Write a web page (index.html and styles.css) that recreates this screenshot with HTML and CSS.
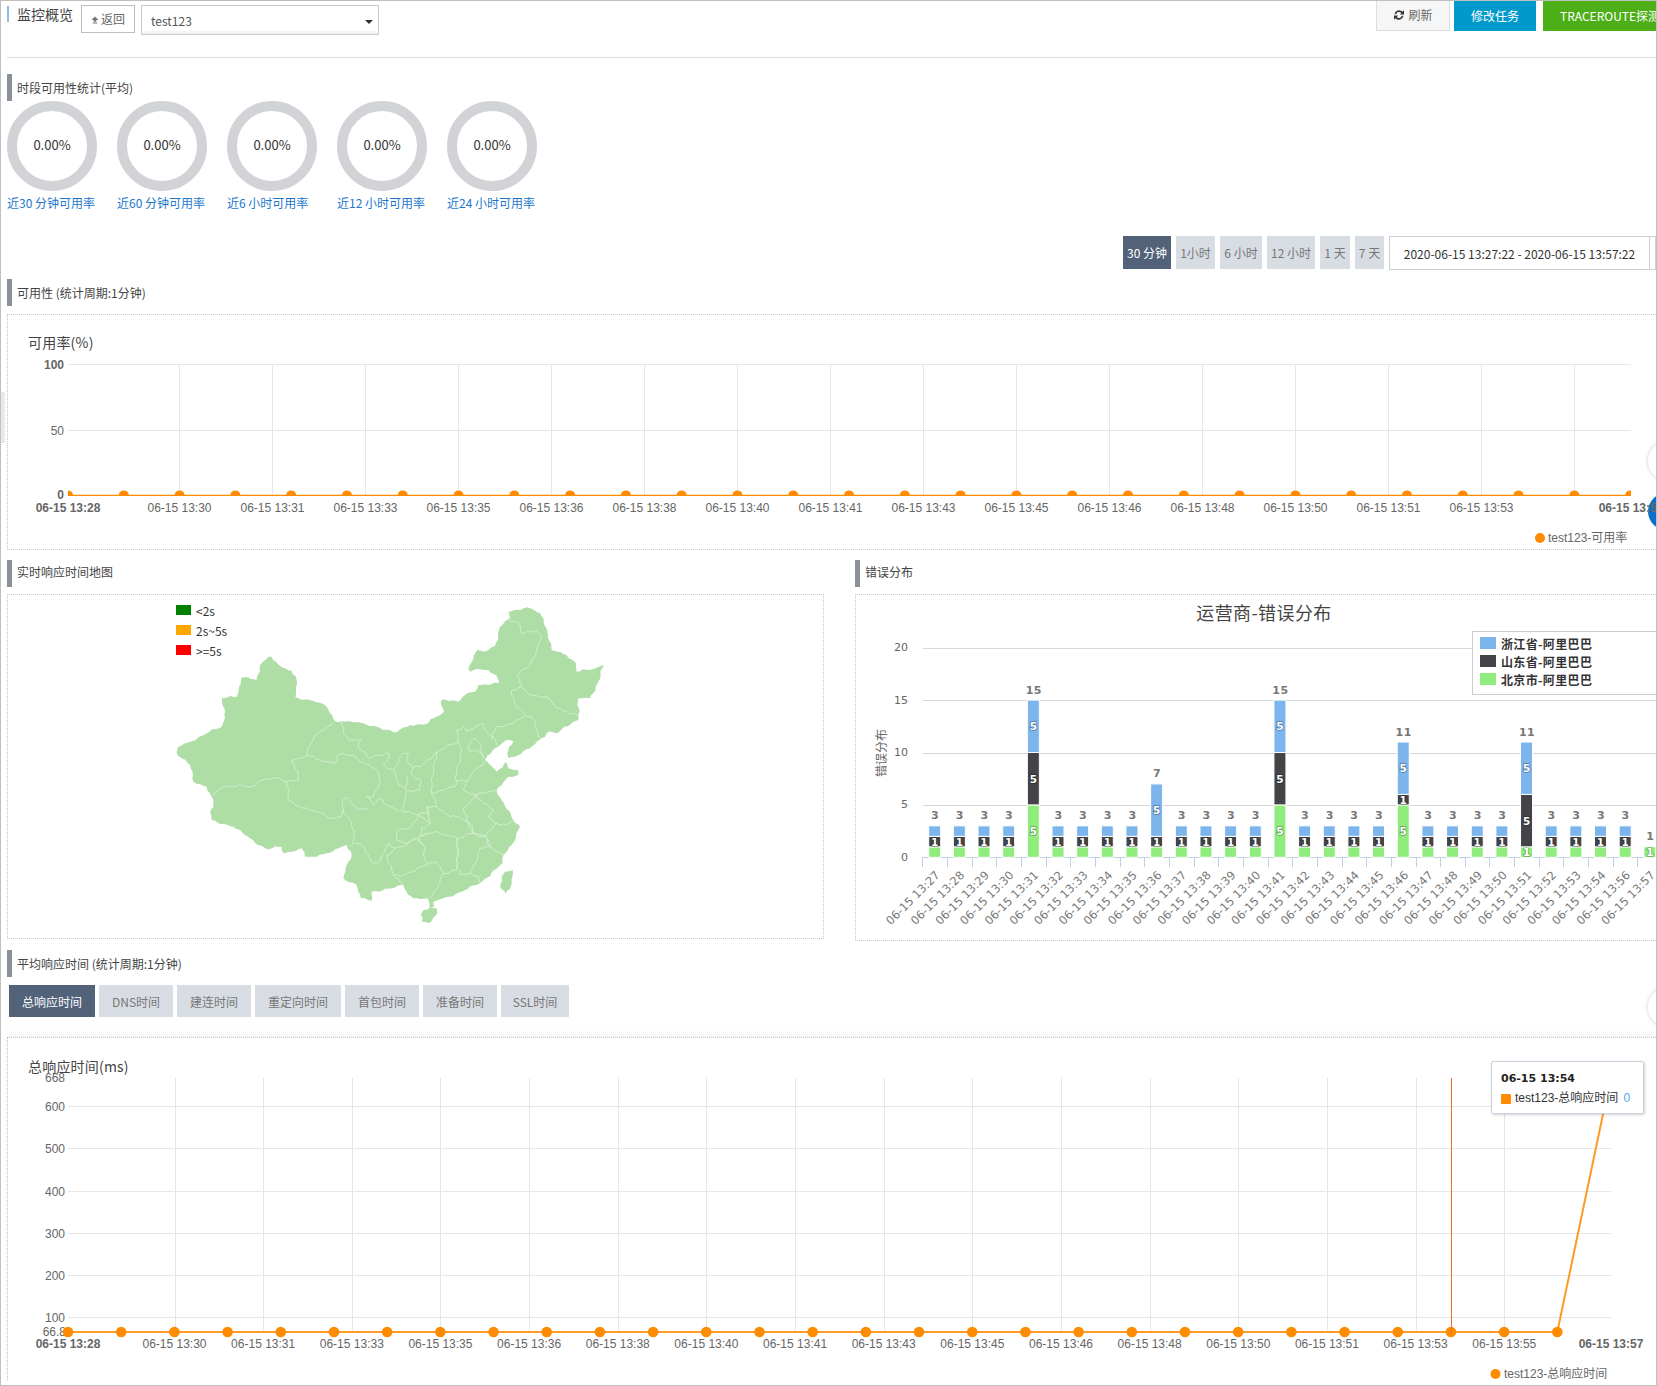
FILE: index.html
```html
<!DOCTYPE html>
<html lang="zh-CN">
<head>
<meta charset="utf-8">
<title>监控概览</title>
<link rel="stylesheet" href="styles.css">
</head>
<body>
<div class="page">
  <div class="side-tab"></div>
  <div class="edge-dot edge-white edge-a"></div>
  <div class="edge-dot edge-blue"></div>
  <div class="edge-dot edge-white edge-b"></div>

  <header class="top">
    <h1 class="title">监控概览</h1>
    <a class="back">
      <svg class="back-icon" viewBox="0 0 9 8"><path d="M4.5 0 8.5 4H6v2H3V4H.5zM2 6.800h5V8H2z"/></svg>返回
    </a>
    <div class="select"><span>test123</span><i class="caret"></i></div>
    <div class="actions">
      <a class="btn btn-light">
        <svg class="refresh" viewBox="0 0 12 12"><path d="M1.500 5.200A4.600 4.600 0 0 1 9.500 2.800L11 1.300V5.500H6.800L8.300 4A3 3 0 0 0 3.100 5.200zM10.500 6.800A4.600 4.600 0 0 1 2.500 9.200L1 10.700V6.500H5.200L3.700 8A3 3 0 0 0 8.900 6.800z"/></svg>刷新
      </a>
      <a class="btn btn-blue">修改任务</a>
      <a class="btn btn-green">TRACEROUTE探测</a>
    </div>
  </header>

  <main class="content">
    <div class="sec sec-first">时段可用性统计(平均)</div>
    <div class="rings">
      <div class="ring-item"><div class="ring">0.00%</div><a class="ring-label">近30 分钟可用率</a></div>
      <div class="ring-item"><div class="ring">0.00%</div><a class="ring-label">近60 分钟可用率</a></div>
      <div class="ring-item"><div class="ring">0.00%</div><a class="ring-label">近6 小时可用率</a></div>
      <div class="ring-item"><div class="ring">0.00%</div><a class="ring-label">近12 小时可用率</a></div>
      <div class="ring-item"><div class="ring">0.00%</div><a class="ring-label">近24 小时可用率</a></div>
    </div>

    <div class="range">
      <a class="rbtn rbtn-on w48">30 分钟</a>
      <a class="rbtn w39">1小时</a>
      <a class="rbtn w42">6 小时</a>
      <a class="rbtn w48">12 小时</a>
      <a class="rbtn w30">1 天</a>
      <a class="rbtn w29">7 天</a>
      <div class="picker"><span class="picker-text">2020-06-15 13:27:22 - 2020-06-15 13:57:22</span></div>
    </div>

    <div class="sec sec-gap">可用性 (统计周期:1分钟)</div>
    <div class="box box-avail"><svg id="avail" class="svg-avail" viewBox="8 315 1648 234"></svg></div>

    <div class="two">
      <section class="col-map">
        <div class="sec sec-up">实时响应时间地图</div>
        <div class="box box-map"><svg id="map" class="svg-map" viewBox="8 595 815 343"></svg></div>
      </section>
      <section class="col-err">
        <div class="sec sec-up">错误分布</div>
        <div class="box box-err"><svg id="err" class="svg-err" viewBox="856 595 800 345"></svg></div>
      </section>
    </div>

    <div class="sec sec-gap">平均响应时间 (统计周期:1分钟)</div>
    <div class="tabs">
      <a class="tab tab-on t86">总响应时间</a>
      <a class="tab t74">DNS时间</a>
      <a class="tab t74">建连时间</a>
      <a class="tab t86">重定向时间</a>
      <a class="tab t74">首包时间</a>
      <a class="tab t74">准备时间</a>
      <a class="tab t68">SSL时间</a>
    </div>
    <div class="box box-resp">
      <svg id="resp" class="svg-resp" viewBox="8 1038 1648 343"></svg>
      <div class="tip">
        <div class="tip-title">06-15 13:54</div>
        <div class="tip-row"><i class="tip-sw"></i>test123-总响应时间<b class="tip-val">0</b></div>
      </div>
    </div>
  </main>
</div>
<script src="charts.js"></script>
</body>
</html>
```

FILE: styles.css
```css
* { box-sizing: border-box; }
html, body { margin: 0; padding: 0; background: #fff; }
body { font-family: "Noto Sans CJK SC", "Liberation Sans", sans-serif; font-size: 12px; color: #444; }
.page { position: relative; width: 1657px; height: 1386px; border: 1px solid #bfbfbf; overflow: hidden; background: #fff; }

.side-tab { position: absolute; left: 0; top: 391px; width: 4px; height: 51px; background: #e9e9e9; }
.edge-dot { position: absolute; border-radius: 50%; }
.edge-white { left: 1647px; width: 40px; height: 40px; background: #fff; box-shadow: 0 0 4px rgba(0, 0, 0, .2); }
.edge-a { top: 440px; }
.edge-b { top: 986px; }
.edge-blue { left: 1647px; top: 492px; width: 37px; height: 37px; background: #0a6fc9; }

.top { display: flex; align-items: flex-start; height: 57px; margin-left: 6px; border-bottom: 1px solid #dcdcdc; }
.title { flex: none; margin: 5px 0 0; width: 66px; height: 16px; padding-left: 8px; border-left: 2px solid #8fbde3; font-size: 14px; font-weight: 400; line-height: 16px; color: #444; white-space: nowrap; }
.back { display: flex; flex: none; align-items: center; justify-content: center; width: 54px; height: 28px; margin: 4px 0 0 8px; border: 1px solid #bdbdbd; color: #666; line-height: 1; }
.back-icon { width: 8px; height: 8px; margin: 2px 2px 0 0; fill: #777; }
.select { position: relative; flex: none; width: 238px; height: 30px; margin: 4px 0 0 6px; padding: 0 9px; border: 1px solid #c9c9c9; line-height: 30px; color: #555; box-shadow: inset 0 -3px 0 #f4f4f4; }
.caret { position: absolute; right: 5px; top: 14px; border-style: solid; border-width: 4px 4px 0; border-color: #333 transparent transparent; }
.actions { display: flex; flex: none; margin-left: 997px; }
.btn { display: flex; align-items: center; justify-content: center; flex: none; height: 30px; padding-bottom: 2px; color: #fff; white-space: nowrap; }
.btn-light { width: 74px; height: 31px; margin-top: -1px; background: #f6f6f6; border: 1px solid #dedede; color: #666; }
.btn-blue { width: 82px; margin-left: 4px; background: #0099cc; }
.btn-green { width: 130px; margin-left: 7px; background: #4daf18; padding-left: 17px; justify-content: flex-start; }
.refresh { width: 12px; height: 12px; margin-right: 3px; fill: #333; }

.content { padding-left: 6px; }
.sec { height: 27px; padding-left: 5px; border-left: 5px solid #8a9097; line-height: 27px; font-size: 12px; color: #444; }
.sec-first { margin-top: 16px; }
.sec-gap { margin-top: 9px; }
.sec-up { line-height: 24px; }

.rings { display: flex; }
.ring-item { width: 110px; flex: none; }
.ring { display: flex; align-items: center; justify-content: center; width: 90px; height: 90px; padding-bottom: 3px; border: 10px solid #d2d3d7; border-radius: 50%; font-size: 13px; color: #333; }
.ring-label { display: block; margin-top: 3px; line-height: 18px; color: #2277cc; white-space: nowrap; }

.range { display: flex; justify-content: flex-end; gap: 5px; margin-top: 24px; height: 34px; }
.rbtn { display: flex; align-items: center; justify-content: center; height: 33px; padding-bottom: 1px; background: #d8dde4; color: #777; white-space: nowrap; }
.rbtn-on { background: #526278; color: #fff; }
.w48 { width: 48px; } .w39 { width: 39px; } .w42 { width: 42px; } .w30 { width: 30px; } .w29 { width: 29px; }
.picker { width: 267px; height: 34px; border: 1px solid #cfcfcf; }
.picker-text { display: flex; align-items: center; justify-content: center; width: 260px; height: 32px; border-right: 1px solid #cfcfcf; color: #333; white-space: nowrap; }

.box { position: relative; margin-top: 8px; border: 1px dotted #c4c4c4; border-right: 0; overflow: hidden; }
.box svg { display: block; }
.box-avail { height: 236px; }
.svg-avail { width: 1648px; height: 234px; }

.two { display: flex; margin-top: 10px; }
.col-map { width: 817px; flex: none; }
.col-err { width: 801px; flex: none; margin-left: 31px; }
.box-map { height: 345px; margin-top: 7px; border-right: 1px dotted #c4c4c4; }
.svg-map { width: 815px; height: 343px; }
.box-err { height: 347px; margin-top: 7px; }
.svg-err { width: 800px; height: 345px; }

.tabs { display: flex; gap: 4px; margin: 8px 0 0 2px; }
.tab { display: flex; align-items: center; justify-content: center; height: 32px; background: #d8dde4; color: #777; white-space: nowrap; }
.tab-on { background: #526278; color: #fff; }
.t86 { width: 86px; } .t74 { width: 74px; } .t68 { width: 68px; }
.box-resp { height: 344px; margin-top: 20px; border-bottom: 0; overflow: visible; box-shadow: 0 -3px 5px rgba(0, 0, 0, .05); }
.svg-resp { width: 1648px; height: 343px; }

.tip { position: absolute; left: 1483px; top: 23px; width: 153px; height: 53px; padding: 9px 9px 0; background: #fff; border: 1px solid #c8d2de; border-radius: 2px; box-shadow: 1px 1px 3px rgba(0, 0, 0, .18); font-family: "Liberation Sans", "Noto Sans CJK SC", sans-serif; color: #333; }
.tip-title { font-family: "DejaVu Sans", sans-serif; font-size: 11px; font-weight: 700; line-height: 15px; color: #222; }
.tip-row { display: flex; align-items: center; margin-top: 3px; line-height: 18px; font-size: 12px; white-space: nowrap; }
.tip-sw { width: 10px; height: 10px; margin: 2px 4px 0 0; background: #ff8c00; border-radius: 1px; }
.tip-val { margin-left: 5px; font-weight: 400; color: #55a5e0; }

/* chart pieces */
.svg-avail text, .svg-resp text, .svg-map text, .svg-err text { dominant-baseline: central; }
.c-title { font-family: "Noto Sans CJK SC", sans-serif; font-size: 14px; letter-spacing: .2px; fill: #444; }
.c-grid { stroke: #e6e6e6; stroke-width: 1; shape-rendering: crispEdges; }
.c-lab { font-family: "Liberation Sans", sans-serif; font-size: 12px; fill: #666; }
.c-lab-b { font-family: "Liberation Sans", sans-serif; font-size: 12px; font-weight: 700; fill: #666; }
.c-leg { font-family: "Liberation Sans", "Noto Sans CJK SC", sans-serif; font-size: 12px; fill: #666; }
.c-line { fill: none; stroke: #ff8c00; stroke-width: 1.500; }
.c-line-2 { fill: none; stroke: #ff9a26; stroke-width: 2; }
.c-pt { fill: #ff8c00; }
.c-cross { stroke: #ee6d22; stroke-width: 1; shape-rendering: crispEdges; }

.m-land { fill: #aedea6; }
.m-line { fill: none; stroke: #e2f3de; stroke-width: 2; stroke-linejoin: round; }
.m-leg { font-family: "Noto Sans CJK SC", sans-serif; font-size: 12px; fill: #333; }
.m-green { fill: #008000; } .m-orange { fill: #ffa500; } .m-red { fill: #ff0000; }

.e-grid { stroke: #d8d8d8; stroke-width: 1; shape-rendering: crispEdges; }
.e-axis { stroke: #c0d0e0; stroke-width: 1; shape-rendering: crispEdges; }
.e-y { font-family: "DejaVu Sans", sans-serif; font-size: 11px; fill: #666; }
.e-x { font-family: "DejaVu Sans", sans-serif; font-size: 11.500px; fill: #777; }
.e-ytitle { font-family: "Noto Sans CJK SC", sans-serif; font-size: 12px; fill: #666; }
.e-title { font-family: "Noto Sans CJK SC", sans-serif; font-size: 18px; letter-spacing: .4px; fill: #444; }
.e-seg { stroke: #fff; stroke-width: 1; }
.e-blue { fill: #7cb5ec; } .e-black { fill: #434348; } .e-green { fill: #90ed7d; }
.e-num { font-family: "DejaVu Sans", sans-serif; font-size: 10.500px; font-weight: 700; fill: #fff; paint-order: stroke; stroke: rgba(0, 0, 0, .35); stroke-width: 1.500; }
.e-sum { font-family: "DejaVu Sans", sans-serif; font-size: 11px; font-weight: 700; letter-spacing: .5px; fill: #777; }
.e-legbox { fill: #fff; stroke: #cccccc; stroke-width: 1; shape-rendering: crispEdges; }
.e-legtxt { font-family: "Noto Sans CJK SC", sans-serif; font-size: 12px; font-weight: 700; letter-spacing: .35px; fill: #333; }
```

FILE: charts.js
```js
function pad(n) { return (n < 10 ? "0" : "") + n; }
function line(x1, y1, x2, y2, c) { return '<line class="' + c + '" x1="' + x1 + '" y1="' + y1 + '" x2="' + x2 + '" y2="' + y2 + '"/>'; }
function text(x, y, s, c, anchor, extra) {
  return '<text class="' + c + '" x="' + x + '" y="' + y + '" text-anchor="' + (anchor || "start") + '"' + (extra || "") + ">" + s + "</text>";
}

/* availability chart */
(function () {
  var h = "", i, x;
  h += text(28, 342, "可用率(%)", "c-title");
  [364.5, 430.5, 495.5].forEach(function (y) { h += line(68, y, 1631, y, "c-grid"); });
  for (i = 0; i < 16; i++) { x = Math.round(179.3 + 93 * i) + 0.5; h += line(x, 364, x, 495, "c-grid"); }
  h += text(64, 365, "100", "c-lab-b", "end") + text(64, 431, "50", "c-lab", "end") + text(64, 495, "0", "c-lab-b", "end");
  var labs = ["13:30", "13:31", "13:33", "13:35", "13:36", "13:38", "13:40", "13:41", "13:43", "13:45", "13:46", "13:48", "13:50", "13:51", "13:53"];
  h += text(68, 508, "06-15 13:28", "c-lab-b", "middle");
  labs.forEach(function (l, k) { h += text(179.5 + 93 * k, 508, "06-15 " + l, "c-lab", "middle"); });
  h += text(1631, 508, "06-15 13:57", "c-lab-b", "middle");
  h += '<clipPath id="cp1"><rect x="68" y="355" width="1563" height="141"/></clipPath><g clip-path="url(#cp1)">';
  h += line(68, 495.4, 1631, 495.4, "c-line");
  for (i = 0; i < 29; i++) { h += '<circle class="c-pt" cx="' + (68 + 55.79 * i) + '" cy="495.400" r="5"/>'; }
  h += "</g>";
  h += '<circle class="c-pt" cx="1540" cy="538" r="5"/>' + text(1548, 538, "test123-可用率", "c-leg");
  document.getElementById("avail").innerHTML = h;
})();

/* province map, traced in a 1440x1050 working space */
(function () {
  /* roughen a traced polyline so borders read as organic, not straight-edged */
  var seed = 0;
  function rough(pts, amp) {
    var out = [], a = pts.trim().split(/\s+/).map(function (p) { return p.split(",").map(Number); });
    a.forEach(function (p, i) {
      out.push(p);
      if (i === a.length - 1) return;
      var q = a[i + 1], dx = q[0] - p[0], dy = q[1] - p[1], len = Math.sqrt(dx * dx + dy * dy);
      var n = Math.floor(len / 9);
      for (var k = 1; k < n; k++) {
        seed += 1;
        var t = k / n, off = (Math.sin(seed * 1.7) + Math.sin(seed * 0.63) * 0.8) * amp * Math.sin(Math.PI * t);
        out.push([Math.round(p[0] + dx * t - dy / len * off), Math.round(p[1] + dy * t + dx / len * off)]);
      }
    });
    return out.map(function (p) { return p.join(","); }).join(" ");
  }
  var main = "365,200 378,215 395,232 425,242 440,270 436,322 490,332 530,350 555,393 575,393 640,400 680,410 735,428 780,405 830,402 860,380 882,365 872,335 880,327 925,335 945,315 975,305 985,285 1048,278 1040,258 1015,240 990,238 960,245 955,235 982,180 1005,185 1035,168 1050,110 1080,85 1076,65 1130,52 1170,70 1190,115 1205,180 1250,195 1278,220 1280,245 1320,240 1362,225 1345,275 1320,325 1285,325 1285,390 1270,395 1222,430 1195,425 1168,450 1140,475 1105,495 1075,505 1072,490 1090,455 1070,450 1045,470 1012,497 1005,510 1040,545 1068,515 1075,535 1105,540 1105,555 1075,560 1040,600 1055,630 1090,690 1110,710 1095,750 1060,795 1058,820 990,880 935,905 880,925 850,935 852,950 838,955 832,925 790,925 770,905 760,885 725,895 665,905 665,932 632,925 620,885 580,865 590,825 605,795 590,765 575,770 530,790 500,800 465,800 455,775 400,790 395,770 350,778 300,745 250,710 185,690 180,665 190,650 185,620 170,590 130,575 120,525 80,490 85,470 120,455 170,430 215,410 225,385 215,325 260,320 275,262 320,270 330,225 355,200 365,200";
  var hainan = "812,975 820,960 860,955 862,970 838,1000 815,995 812,975";
  var taiwan = "1065,845 1088,840 1085,880 1067,912 1050,890 1055,860 1065,845";
  var borders = [
    "190,618 215,592 250,590 270,582 300,592 340,570 380,563 415,573 443,573 445,545 425,512 470,495 485,455 510,425 550,400",
    "410,575 415,630 450,650 500,665 540,685 575,680 578,630 590,622 605,640 625,660 655,655",
    "578,660 605,695 612,745 605,770",
    "470,495 510,510 555,520 570,492 610,497 640,517 680,540 692,575 670,620 650,620 670,645 690,625 720,650 745,662",
    "575,393 580,430 600,450 635,450 625,470 660,505 715,488 718,505 700,525 730,540 745,585 765,597 772,560",
    "730,540 760,490 775,490 770,515 790,530 782,550 812,570 808,600 770,600 760,660",
    "862,485 850,530 845,610 860,650 830,650 835,670 805,675 750,660",
    "790,530 810,530 862,485 925,455 935,480",
    "925,455 920,420 940,410 950,425 1000,400 1012,430 1035,445 1045,470",
    "955,470 975,445 995,465 990,480 1002,505 985,485 955,480 955,470",
    "935,480 915,570 950,575 985,530 1005,515",
    "950,575 940,600 975,615 1040,600",
    "845,610 915,590 920,570",
    "860,650 885,670 920,680 960,700 970,730",
    "940,655 970,625 985,610",
    "975,615 1000,640 1030,660 1015,680 1040,700 1070,705 1090,690",
    "940,655 950,690 970,730 1005,740 1040,700",
    "1010,745 1020,770 1060,795",
    "920,745 970,730 1010,740 1020,770 990,775 970,830 960,850 930,855 920,830 925,790 920,745",
    "830,730 860,725 890,735 920,745 925,790 920,840 880,850 860,815 830,825 820,790 825,770 805,740 830,730",
    "960,850 985,860 990,880",
    "880,850 870,880 838,925",
    "730,855 760,855 830,825",
    "730,855 760,885",
    "710,795 735,775 770,765 800,745 825,770",
    "710,795 730,855",
    "612,760 640,770 670,820 690,815 715,760 735,775",
    "745,720 740,750 770,760 800,745",
    "745,720 780,715 805,675 840,700 815,715 810,735 830,730",
    "840,700 830,650",
    "1025,450 1040,410 1060,410 1125,378 1150,385 1168,445",
    "1085,300 1095,345 1125,375",
    "1115,290 1140,315 1190,320 1220,355 1250,365 1285,375",
    "1075,65 1075,90 1105,100 1115,130 1160,120 1175,140 1160,180 1140,225 1100,258 1115,290 1085,300"
  ];
  var h = '<g transform="translate(150 590) scale(.33333)">';
  [main, hainan, taiwan].forEach(function (p) { h += '<polygon class="m-land" points="' + rough(p, 2.5) + '"/>'; });
  borders.forEach(function (b) { h += '<polyline class="m-line" points="' + rough(b, 3) + '"/>'; });
  h += "</g>";
  [["m-green", 605, "&lt;2s"], ["m-orange", 625, "2s~5s"], ["m-red", 645, "&gt;=5s"]].forEach(function (r) {
    h += '<rect class="' + r[0] + '" x="176" y="' + r[1] + '" width="15" height="10"/>';
    h += text(196, r[1] + 5, r[2], "m-leg");
  });
  document.getElementById("map").innerHTML = h;
})();

/* error distribution stacked columns */
(function () {
  var h = "", i, step = 24.66;
  function yv(v) { return 857.3 - v * 10.48; }
  h += text(1264, 612, "运营商-错误分布", "e-title", "middle");
  [5, 10, 15, 20].forEach(function (v) { var y = Math.round(yv(v)) + 0.5; h += line(923, y, 1656, y, "e-grid"); });
  [0, 5, 10, 15, 20].forEach(function (v) { h += text(908, yv(v), v, "e-y", "end"); });
  h += text(880, 753, "错误分布", "e-ytitle", "middle", ' transform="rotate(-90 880 753)"');
  h += line(922, 857.5, 1656, 857.5, "e-axis");
  for (i = 0; i < 30; i++) { var tx = Math.round(922.3 + step * i) + 0.5; h += line(tx, 857, tx, 867, "e-axis"); }

  var minutes = [];
  for (i = 27; i <= 54; i++) minutes.push(i);
  minutes.push(56, 57);
  var big = { 4: [5, 5, 5], 9: [1, 1, 5], 14: [5, 5, 5], 19: [5, 1, 5], 24: [1, 5, 5], 29: [1, 0, 0] };
  var cls = ["e-green", "e-black", "e-blue"];
  minutes.forEach(function (m, k) {
    var cx = 934.7 + step * k, stack = big[k] || [1, 1, 1], sum = 0;
    stack.forEach(function (v, j) {
      if (!v) return;
      var yt = yv(sum + v), yb = yv(sum);
      h += '<rect class="e-seg ' + cls[j] + '" x="' + (cx - 6) + '" y="' + yt + '" width="12" height="' + (yb - yt) + '"/>';
      var showOne = j === 1 || k === 24 || k === 29;
      if (v > 1 || showOne) h += text(cx, (yt + yb) / 2, v, "e-num", "middle");
      sum += v;
    });
    h += text(cx + 0.5, yv(sum) - 10, sum, "e-sum", "middle");
    var ax = cx + 3, ay = 873;
    h += text(ax, ay, "06-15 13:" + pad(m), "e-x", "end", ' transform="rotate(-45 ' + ax + " " + ay + ')"');
  });

  h += '<rect class="e-legbox" x="1472.5" y="631.5" width="190" height="63"/>';
  [["e-blue", 637, "浙江省-阿里巴巴"], ["e-black", 655, "山东省-阿里巴巴"], ["e-green", 673, "北京市-阿里巴巴"]].forEach(function (r) {
    h += '<rect class="' + r[0] + '" x="1480" y="' + r[1] + '" width="16" height="12"/>';
    h += text(1501, r[1] + 6.5, r[2], "e-legtxt");
  });
  document.getElementById("err").innerHTML = h;
})();

/* response time chart */
(function () {
  var h = "", i, x;
  h += text(28, 1066, "总响应时间(ms)", "c-title");
  var vals = [[600, 1106.5], [500, 1148.5], [400, 1191.5], [300, 1233.5], [200, 1275.5], [100, 1317.5]];
  vals.forEach(function (r) { h += line(68, r[1], 1611, r[1], "c-grid"); h += text(65, r[1], r[0], "c-lab", "end"); });
  h += text(65, 1078, "668", "c-lab", "end") + text(66, 1332, "66.8", "c-lab", "end");
  for (i = 0; i < 16; i++) { x = Math.round(174.5 + 88.65 * i) + 0.5; h += line(x, 1078, x, 1332, "c-grid"); }
  var labs = ["13:30", "13:31", "13:33", "13:35", "13:36", "13:38", "13:40", "13:41", "13:43", "13:45", "13:46", "13:48", "13:50", "13:51", "13:53", "13:55"];
  h += text(68, 1344, "06-15 13:28", "c-lab-b", "middle");
  labs.forEach(function (l, k) { h += text(174.5 + 88.65 * k, 1344, "06-15 " + l, "c-lab", "middle"); });
  h += text(1611, 1344, "06-15 13:57", "c-lab-b", "middle");
  h += '<polyline class="c-line-2" points="68,1332 1557.3,1332 1610.6,1078"/>';
  for (i = 0; i < 29; i++) { h += '<circle class="c-pt" cx="' + (68 + 53.19 * i) + '" cy="1332" r="5.300"/>'; }
  h += line(1451.5, 1078, 1451.5, 1332, "c-cross");
  h += '<circle class="c-pt" cx="1495.500" cy="1374" r="5"/>' + text(1504, 1374, "test123-总响应时间", "c-leg");
  document.getElementById("resp").innerHTML = h;
})();
```
